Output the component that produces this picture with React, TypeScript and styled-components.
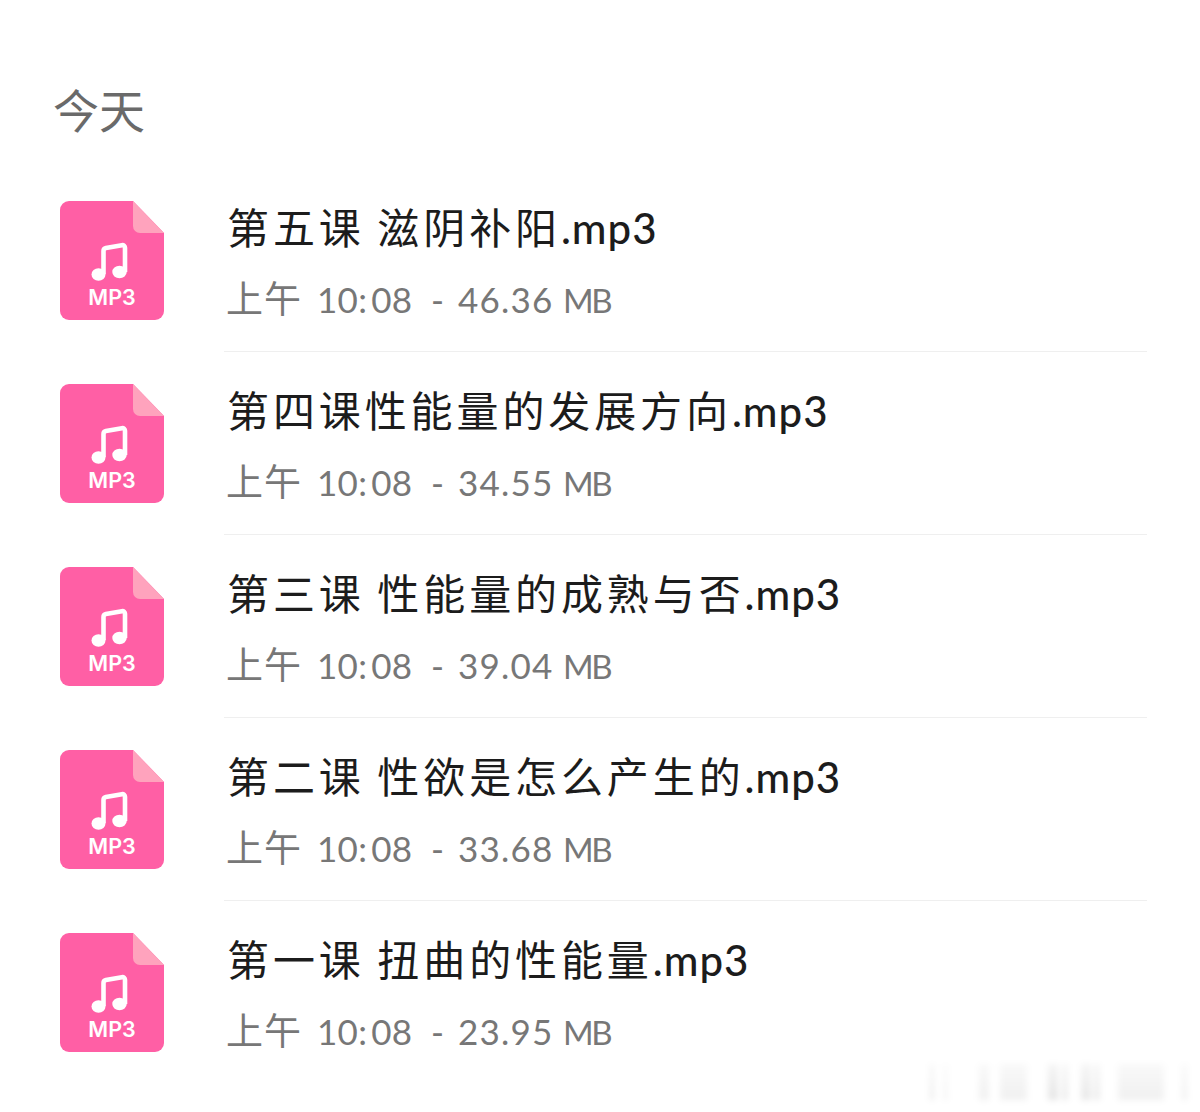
import React from "react";
import styled, { createGlobalStyle } from "styled-components";

const Global = createGlobalStyle`
  html, body { margin: 0; padding: 0; background: #fff; }
  #root { width: 1200px; height: 1112px; overflow: hidden; }
`;

const cjk = `Lato, "Noto Sans CJK SC", sans-serif`;

const Page = styled.main`
  position: relative;
  box-sizing: border-box;
  width: 1200px;
  height: 1112px;
  padding: 82px 54px 0 54px;
  background: #fff;
  font-family: ${cjk};
`;

const DayHeading = styled.h2`
  margin: -1px 0 60px -1px;
  height: 60px;
  line-height: 60px;
  font-size: 46px;
  font-weight: 400;
  color: #6a6a6a;
`;

const FileList = styled.ul`
  list-style: none;
  margin: 0;
  padding: 0;
  display: flex;
  flex-direction: column;
`;

const FileRow = styled.li`
  display: flex;
  height: 183px;
  padding-left: 6px;
`;

const IconSlot = styled.div`
  flex: 0 0 104px;
  height: 119px;
`;

const FileBody = styled.div<{ $divider: boolean }>`
  flex: 1;
  margin-left: 60px;
  margin-right: -1px;
  height: 150px;
  border-bottom: ${(p) => (p.$divider ? "1px solid #efefef" : "none")};
`;

const FileName = styled.div`
  margin: -2px 0 0 3px;
  height: 58px;
  line-height: 58px;
  font-size: 42px;
  letter-spacing: 3.9px;
  word-spacing: -2px;
  font-weight: 400;
  color: #1c1c1c;
  white-space: pre;
`;

const FileExt = styled.span`
  font-weight: 500;
  letter-spacing: 1px;
`;

const FileMeta = styled.div`
  display: flex;
  align-items: baseline;
  margin: 17px 0 0 2px;
  height: 50px;
  line-height: 50px;
  font-size: 35px;
  font-weight: 400;
  color: #777;
  white-space: pre;
`;

const MetaDay = styled.span`
  width: 91px;
  font-size: 37px;
  letter-spacing: 1px;
`;

const MetaClock = styled.span`
  width: 114px;
  letter-spacing: 0.3px;
`;

const MetaMinutes = styled.span`
  margin-left: 4px;
`;

const MetaDash = styled.span`
  width: 27px;
`;

const MetaAmount = styled.span`
  width: 105px;
  letter-spacing: 1.2px;
`;

const MetaUnit = styled.span`
  font-size: 33px;
  letter-spacing: -2.4px;
`;

const BlurStrip = styled.div`
  position: absolute;
  left: 0;
  right: 0;
  top: 1064px;
  height: 36px;
  filter: blur(3px);
`;

const BlurBar = styled.span<{ $x: number; $w: number; $shade: number }>`
  position: absolute;
  top: 0;
  bottom: 0;
  left: ${(p) => p.$x}px;
  width: ${(p) => p.$w}px;
  background: linear-gradient(to bottom, rgba(0,0,0,${(p) => p.$shade * 0.4}), rgba(0,0,0,${(p) => p.$shade}));
`;

const Mp3Icon = () => (
  <svg width="104" height="119" viewBox="0 0 104 119">
    <path d="M9 0H73L104 32V110a9 9 0 0 1-9 9H9a9 9 0 0 1-9-9V9a9 9 0 0 1 9-9Z" fill="#ff5fa5" />
    <path d="M73 0L104 32H80a7 7 0 0 1-7-7Z" fill="#ffa3bd" />
    <path
      d="M43.5 73V50c0-1.5 1-2.6 2.4-2.9l16-2.9c1.7-.3 3.1.9 3.1 2.6V71"
      fill="none"
      stroke="#fff"
      strokeWidth="4.6"
      strokeLinejoin="round"
    />
    <ellipse cx="38.5" cy="73.5" rx="7" ry="6.2" fill="#fff" />
    <ellipse cx="59.5" cy="71" rx="7.2" ry="6.2" fill="#fff" />
    <text x="52" y="104" textAnchor="middle" fontFamily="Inter, sans-serif" fontSize="21.5" fontWeight="600" fill="#fff">
      MP3
    </text>
  </svg>
);

const files = [
  { name: "第五课 滋阴补阳", size: "46.36" },
  { name: "第四课性能量的发展方向", size: "34.55" },
  { name: "第三课 性能量的成熟与否", size: "39.04" },
  { name: "第二课 性欲是怎么产生的", size: "33.68" },
  { name: "第一课 扭曲的性能量", size: "23.95" },
];

const bars = [
  { x: 930, w: 4, s: 0.08 },
  { x: 944, w: 3, s: 0.06 },
  { x: 979, w: 10, s: 0.06 },
  { x: 1000, w: 27, s: 0.06 },
  { x: 1048, w: 10, s: 0.1 },
  { x: 1062, w: 6, s: 0.08 },
  { x: 1081, w: 10, s: 0.09 },
  { x: 1094, w: 6, s: 0.08 },
  { x: 1118, w: 46, s: 0.06 },
  { x: 1182, w: 5, s: 0.06 },
];

export default function App() {
  return (
    <Page>
      <Global />
      <DayHeading>今天</DayHeading>
      <FileList>
        {files.map((f, i) => (
          <FileRow key={f.name}>
            <IconSlot>
              <Mp3Icon />
            </IconSlot>
            <FileBody $divider={i < files.length - 1}>
              <FileName>
                {f.name}
                <FileExt>.mp3</FileExt>
              </FileName>
              <FileMeta>
                <MetaDay>上午</MetaDay>
                <MetaClock>
                  10:<MetaMinutes>08</MetaMinutes>
                </MetaClock>
                <MetaDash>-</MetaDash>
                <MetaAmount>{f.size}</MetaAmount>
                <MetaUnit>MB</MetaUnit>
              </FileMeta>
            </FileBody>
          </FileRow>
        ))}
      </FileList>
      <BlurStrip>
        {bars.map((b) => (
          <BlurBar key={b.x} $x={b.x} $w={b.w} $shade={b.s} />
        ))}
      </BlurStrip>
    </Page>
  );
}
